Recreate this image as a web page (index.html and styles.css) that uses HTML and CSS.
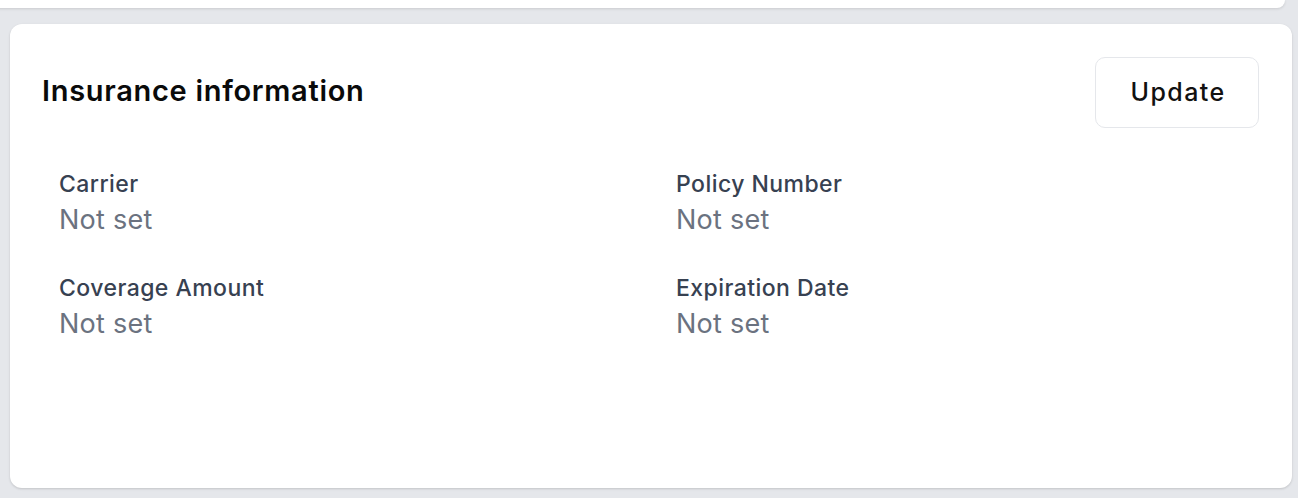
FILE: index.html
```html
<!DOCTYPE html>
<html>
<head>
<meta charset="utf-8">
<link rel="stylesheet" href="styles.css">
</head>
<body>
<div class="page">
  <div class="prev-card"></div>
  <section class="card">
    <div class="card-header">
      <h2 class="card-title">Insurance information</h2>
      <button class="btn">Update</button>
    </div>
    <dl class="fields">
      <div class="field">
        <dt class="label">Carrier</dt>
        <dd class="value">Not set</dd>
      </div>
      <div class="field">
        <dt class="label">Policy Number</dt>
        <dd class="value">Not set</dd>
      </div>
      <div class="field">
        <dt class="label">Coverage Amount</dt>
        <dd class="value">Not set</dd>
      </div>
      <div class="field">
        <dt class="label">Expiration Date</dt>
        <dd class="value">Not set</dd>
      </div>
    </dl>
  </section>
</div>
</body>
</html>
```

FILE: styles.css
```css
* { box-sizing: border-box; }
html, body {
  margin: 0;
  padding: 0;
  background: #e5e7eb;
  font-family: Inter, "Liberation Sans", sans-serif;
  overflow: hidden;
}
.page {
  width: 1298px;
  height: 498px;
  padding: 0 6px 0 10px;
  display: flex;
  flex-direction: column;
  gap: 16px;
}
.prev-card {
  height: 8px;
  margin-left: -40px;
  margin-right: 7px;
  background: #fff;
  border-radius: 0 0 12px 12px;
  box-shadow: 0 1px 3px rgba(0,0,0,0.12);
}
.card {
  height: 464px;
  background: #fff;
  border-radius: 12px;
  box-shadow: 0 1px 3px rgba(0,0,0,0.1), 0 1px 2px rgba(0,0,0,0.06);
  padding: 32px 32px;
}
.card-header {
  display: flex;
  justify-content: space-between;
  align-items: center;
  height: 72px;
  margin-right: 1px;
}
.card-title {
  margin: -2px 0 0 0;
  font-size: 29px;
  line-height: 34px;
  font-weight: 600;
  color: #0a0a0a;
  letter-spacing: 0.7px;
}
.btn {
  font-family: inherit;
  font-size: 25px;
  font-weight: 500;
  letter-spacing: 1.4px;
  color: #111;
  background: #fff;
  border: 1.5px solid #e5e7eb;
  border-radius: 10px;
  width: 164px;
  height: 71px;
  padding: 0 0 0 2px;
}
.fields {
  margin: 42px 0 0 0;
  padding: 0 17px;
  display: grid;
  grid-template-columns: 567px 567px;
  column-gap: 50px;
  row-gap: 37px;
}
.field { margin: 0; }
.label {
  font-size: 23px;
  line-height: 28px;
  font-weight: 500;
  letter-spacing: 0.45px;
  color: #374151;
}
.value {
  margin: 5px 0 0 0;
  font-size: 27px;
  line-height: 34px;
  letter-spacing: 0.25px;
  color: #6b7280;
}
```
